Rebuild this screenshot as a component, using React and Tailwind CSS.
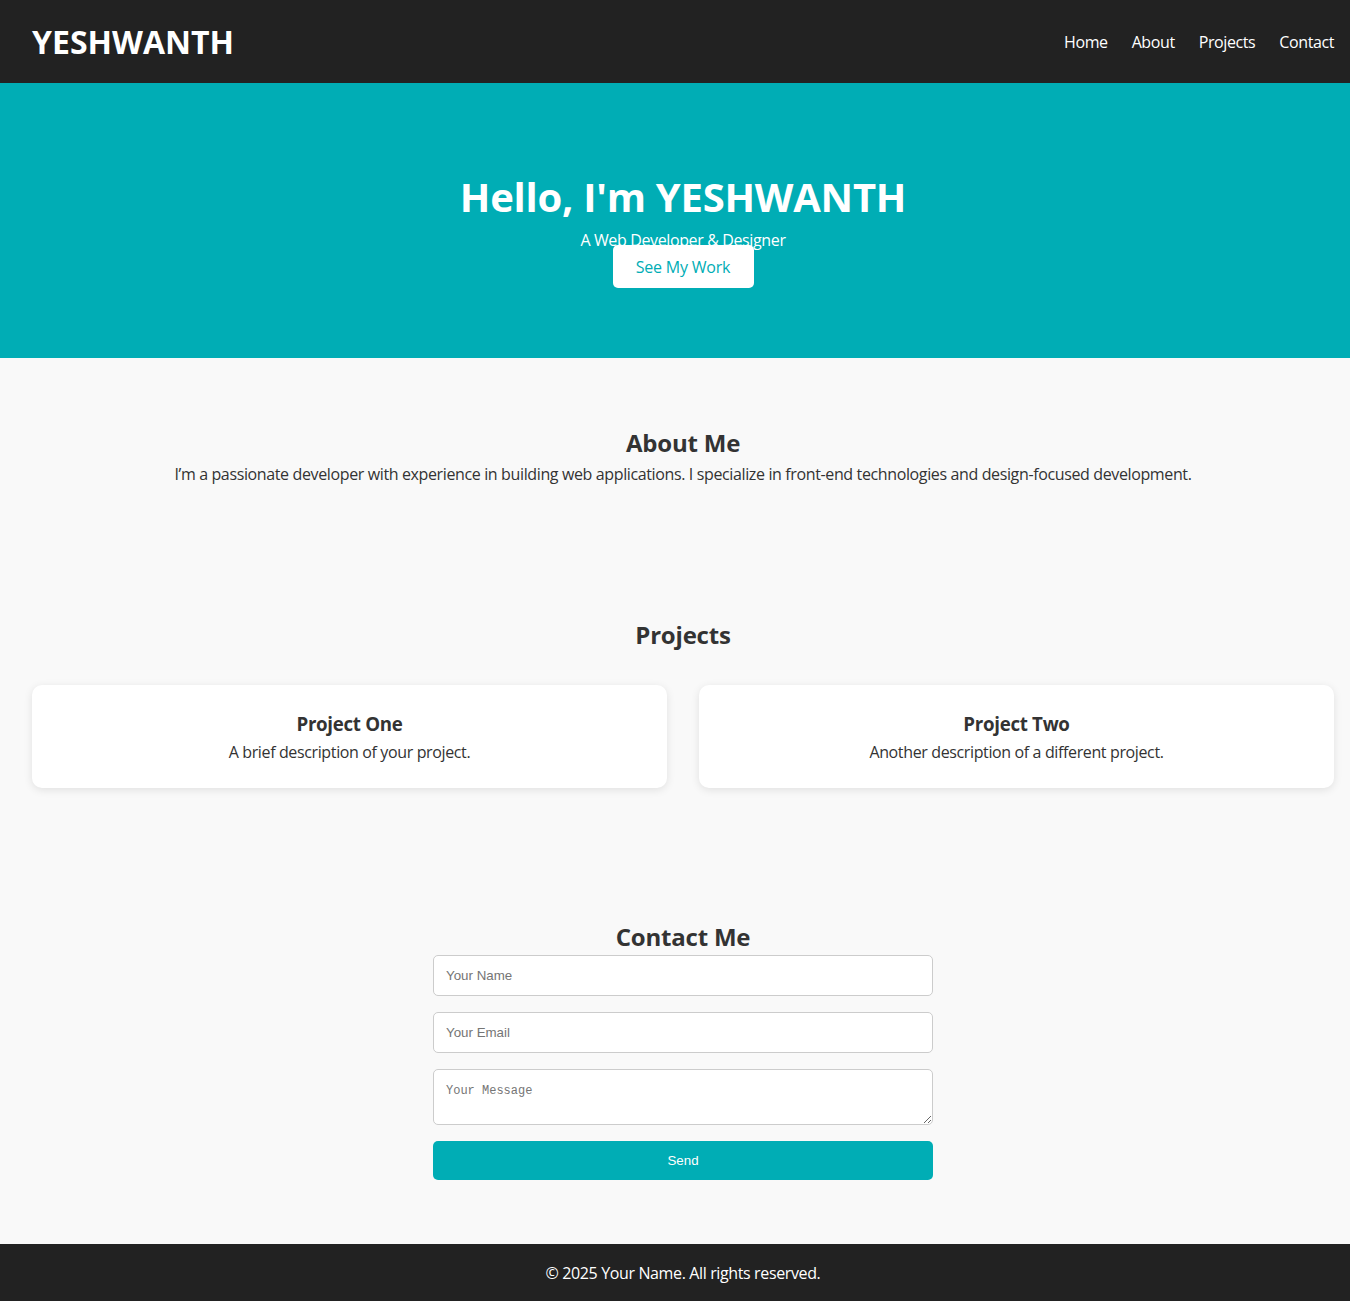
import React from 'react';

const projects = [
  { title: 'Project One', desc: 'A brief description of your project.' },
  { title: 'Project Two', desc: 'Another description of a different project.' },
];

const field =
  "h-[41px] px-3 bg-white border border-[#ccc] rounded-[5px] text-[13.33px] font-['Liberation_Sans',Arial,sans-serif] placeholder:text-[#757575] outline-none";

export default function App() {
  return (
    <div className="w-full overflow-hidden bg-[#f9f9f9]">
      <div className="w-[1366px] min-h-[1301px] bg-[#f9f9f9] text-[#333] font-['Open_Sans','Noto_Sans',sans-serif]">
        {/* Header */}
        <header className="h-[83px] bg-[#222] text-white flex items-center justify-between px-8">
          <h1 className="text-[32px] leading-none font-bold">YESHWANTH</h1>
          <nav className="flex gap-6 text-base tracking-[-0.4px]">
            <a href="#home">Home</a>
            <a href="#about">About</a>
            <a href="#projects">Projects</a>
            <a href="#contact">Contact</a>
          </nav>
        </header>

        {/* Hero */}
        <section id="home" className="h-[275px] bg-[#00adb5] text-white flex flex-col items-center pt-[90px]">
          <h2 className="text-[40px] leading-[48px] font-bold tracking-[-0.25px]">Hello, I'm YESHWANTH</h2>
          <p className="mt-[7px] text-base leading-6 tracking-[-0.37px]">A Web Developer &amp; Designer</p>
          <a href="#projects" className="relative -mt-[7px] w-[141px] h-[43px] flex items-center justify-center bg-white text-[#00adb5] rounded-[5px] text-base tracking-[-0.2px]">
            See My Work
          </a>
        </section>

        {/* About */}
        <section id="about" className="pt-[69px] text-center">
          <h2 className="text-2xl leading-8 font-bold tracking-[-0.2px]">About Me</h2>
          <p className="mt-[3px] text-base leading-6 tracking-[-0.37px]">
            I’m a passionate developer with experience in building web applications. I specialize in front-end technologies and design-focused development.
          </p>
        </section>

        {/* Projects */}
        <section id="projects" className="pt-[133px] px-8 text-center">
          <h2 className="text-2xl leading-8 font-bold tracking-[-0.2px]">Projects</h2>
          <div className="mt-[34px] grid grid-cols-2 gap-8">
            {projects.map((p) => (
              <div key={p.title} className="h-[103px] bg-white rounded-[10px] shadow-[0_2px_8px_rgba(0,0,0,0.1)] pt-[26px]">
                <h3 className="text-[18.72px] leading-[26px] font-bold tracking-[-0.3px]">{p.title}</h3>
                <p className="mt-[3px] text-base leading-6 tracking-[-0.37px]">{p.desc}</p>
              </div>
            ))}
          </div>
        </section>

        {/* Contact */}
        <section id="contact" className="pt-[133px] pb-16 flex flex-col items-center">
          <h2 className="text-2xl leading-8 font-bold tracking-[-0.2px]">Contact Me</h2>
          <form className="mt-[2px] w-[500px] flex flex-col gap-4" onSubmit={(e) => e.preventDefault()}>
            <input type="text" placeholder="Your Name" className={field} />
            <input type="email" placeholder="Your Email" className={field} />
            <textarea
              placeholder="Your Message"
              className="h-[56px] px-3 pt-[13px] bg-white border border-[#ccc] rounded-[5px] text-[12px] leading-4 font-['Liberation_Mono',monospace] placeholder:text-[#757575] outline-none"
            />
            <button
              type="submit"
              className="h-[39px] bg-[#00adb5] text-white rounded-[5px] text-[13.33px] font-['Liberation_Sans',Arial,sans-serif]"
            >
              Send
            </button>
          </form>
        </section>

        {/* Footer */}
        <footer className="h-[57px] bg-[#222] text-white flex items-center justify-center text-base tracking-[-0.37px]">
          © 2025 Your Name. All rights reserved.
        </footer>
      </div>
    </div>
  );
}
